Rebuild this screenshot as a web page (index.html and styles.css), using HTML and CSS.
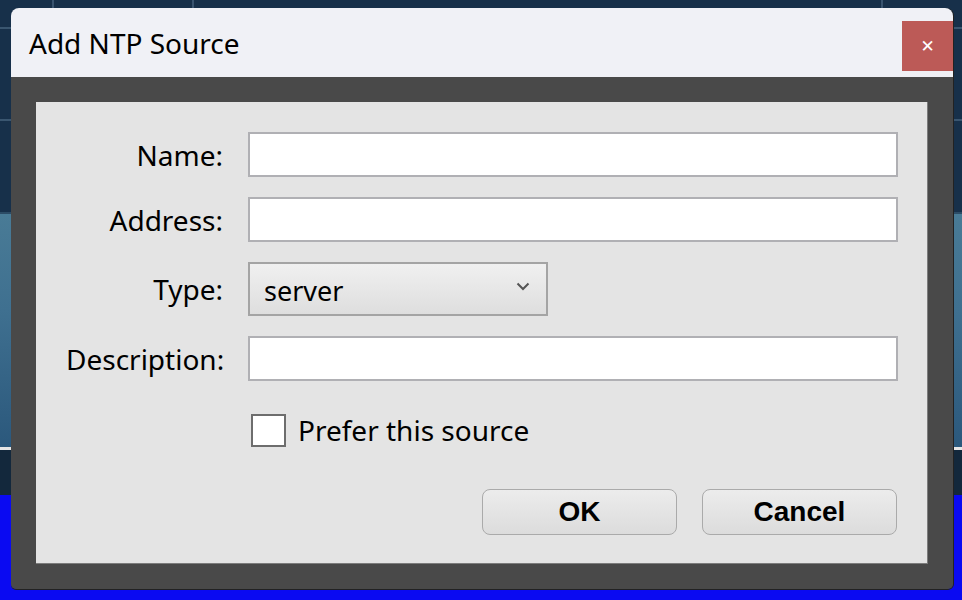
FILE: index.html
```html
<!DOCTYPE html>
<html lang="en">
<head>
  <meta charset="UTF-8">
  <title>Add NTP Source</title>
  <link rel="stylesheet" href="styles.css">
</head>
<body>
  <div class="dialog">
    <div class="titlebar">
      <span class="title">Add NTP Source</span>
      <button class="close-btn" aria-label="Close">&#x2715;</button>
    </div>
    <div class="frame">
      <form class="panel">
        <div class="fields">
          <label for="name">Name:</label>
          <input type="text" id="name" class="field">

          <label for="address">Address:</label>
          <input type="text" id="address" class="field">

          <label for="type">Type:</label>
          <div class="select">
            <span>server</span>
            <svg class="chevron" width="14" height="9" viewBox="0 0 14 9">
              <path d="M1.5 1.5 L7 7 L12.5 1.5" fill="none" stroke="#555" stroke-width="2"/>
            </svg>
          </div>

          <label for="desc">Description:</label>
          <input type="text" id="desc" class="field">

          <span></span>
          <label class="check">
            <span class="box"></span>
            Prefer this source
          </label>
        </div>
        <div class="buttons">
          <button type="button" class="btn">OK</button>
          <button type="button" class="btn">Cancel</button>
        </div>
      </form>
    </div>
  </div>
</body>
</html>
```

FILE: styles.css
```css
html, body {
  height: 100%;
}
body {
  margin: 0;
  font-family: 'Noto Sans', 'Open Sans', sans-serif;
  color: #000;
  overflow: hidden;
  background:
    linear-gradient(to right, transparent 52px, rgba(120,150,180,0.35) 52px, rgba(120,150,180,0.35) 54px, transparent 54px),
    linear-gradient(to right, transparent 192px, rgba(120,150,180,0.35) 192px, rgba(120,150,180,0.35) 194px, transparent 194px),
    linear-gradient(to right, transparent 881px, rgba(120,150,180,0.35) 881px, rgba(120,150,180,0.35) 883px, transparent 883px),
    linear-gradient(to bottom,
      #17304a 0, #17304a 27px, #3a5670 27px, #3a5670 29px, #17304a 29px,
      #17304a 119px, #3a5670 119px, #3a5670 121px, #17304a 121px,
      #17304a 212px, #2c4c66 212px, #2c4c66 214px,
      #497b96 214px, #3f7090 310px, #2b587c 447px,
      #e6e6e6 447px, #e6e6e6 450px,
      #13283c 450px, #13283c 495px,
      #0a0af2 495px);
  background-size: 100% 495px, 100% 495px, 100% 495px, 100% 100%;
  background-repeat: no-repeat;
}
.dialog {
  width: 942px;
  margin: 8px 0 0 11px;
  border-radius: 8px 8px 5px 5px;
  overflow: hidden;
  box-shadow: 1px 0 0 #222, 0 1px 0 #222;
}
.titlebar {
  height: 69px;
  background: #f0f1f6;
  display: flex;
  align-items: center;
  justify-content: space-between;
}
.title {
  font-size: 28px;
  margin-left: 18px;
}
.close-btn {
  align-self: flex-start;
  margin-top: 13px;
  width: 51px;
  height: 50px;
  border: none;
  padding: 0;
  background: #bc5a57;
  color: #fff;
  font-size: 17px;
  font-weight: bold;
  font-family: 'DejaVu Sans', sans-serif;
}
.frame {
  background: #494949;
  padding: 25px;
}
.panel {
  background: #e4e4e4;
  padding: 30px;
  border-right: 1px solid #7c7c7c;
  border-bottom: 1px solid #7c7c7c;
  height: 401px;
}
.fields {
  display: grid;
  grid-template-columns: 157px 650px;
  column-gap: 25px;
  row-gap: 20px;
  align-items: center;
}
.fields > label {
  font-size: 28px;
  text-align: right;
}
.field {
  box-sizing: border-box;
  width: 650px;
  height: 45px;
  border: 2px solid #b0b0b4;
  background: #fff;
  margin: 0;
}
.select {
  box-sizing: border-box;
  width: 300px;
  height: 54px;
  border: 2px solid #a4a4a4;
  background: linear-gradient(#f0f0f0, #dedede);
  display: flex;
  align-items: center;
  justify-content: space-between;
  padding: 2px 16px 0 14px;
  font-size: 27px;
}
.chevron {
  margin-top: -7px;
}
.fields > .check {
  grid-column: 2;
  display: flex;
  align-items: center;
  gap: 12px;
  margin-top: 10px;
  margin-left: 3px;
  text-align: left;
  font-size: 28px;
}
.box {
  box-sizing: border-box;
  width: 35px;
  height: 33px;
  border: 2px solid #6d6d6d;
  background: #fff;
}
.buttons {
  display: flex;
  justify-content: flex-end;
  gap: 25px;
  margin-top: 40px;
}
.btn {
  width: 195px;
  height: 46px;
  border: 1px solid #aaa;
  border-radius: 8px;
  background: linear-gradient(#ececec, #dcdcdc);
  font-family: 'Liberation Sans', Arial, sans-serif;
  font-weight: bold;
  font-size: 28px;
  color: #000;
  padding: 0;
}
```
